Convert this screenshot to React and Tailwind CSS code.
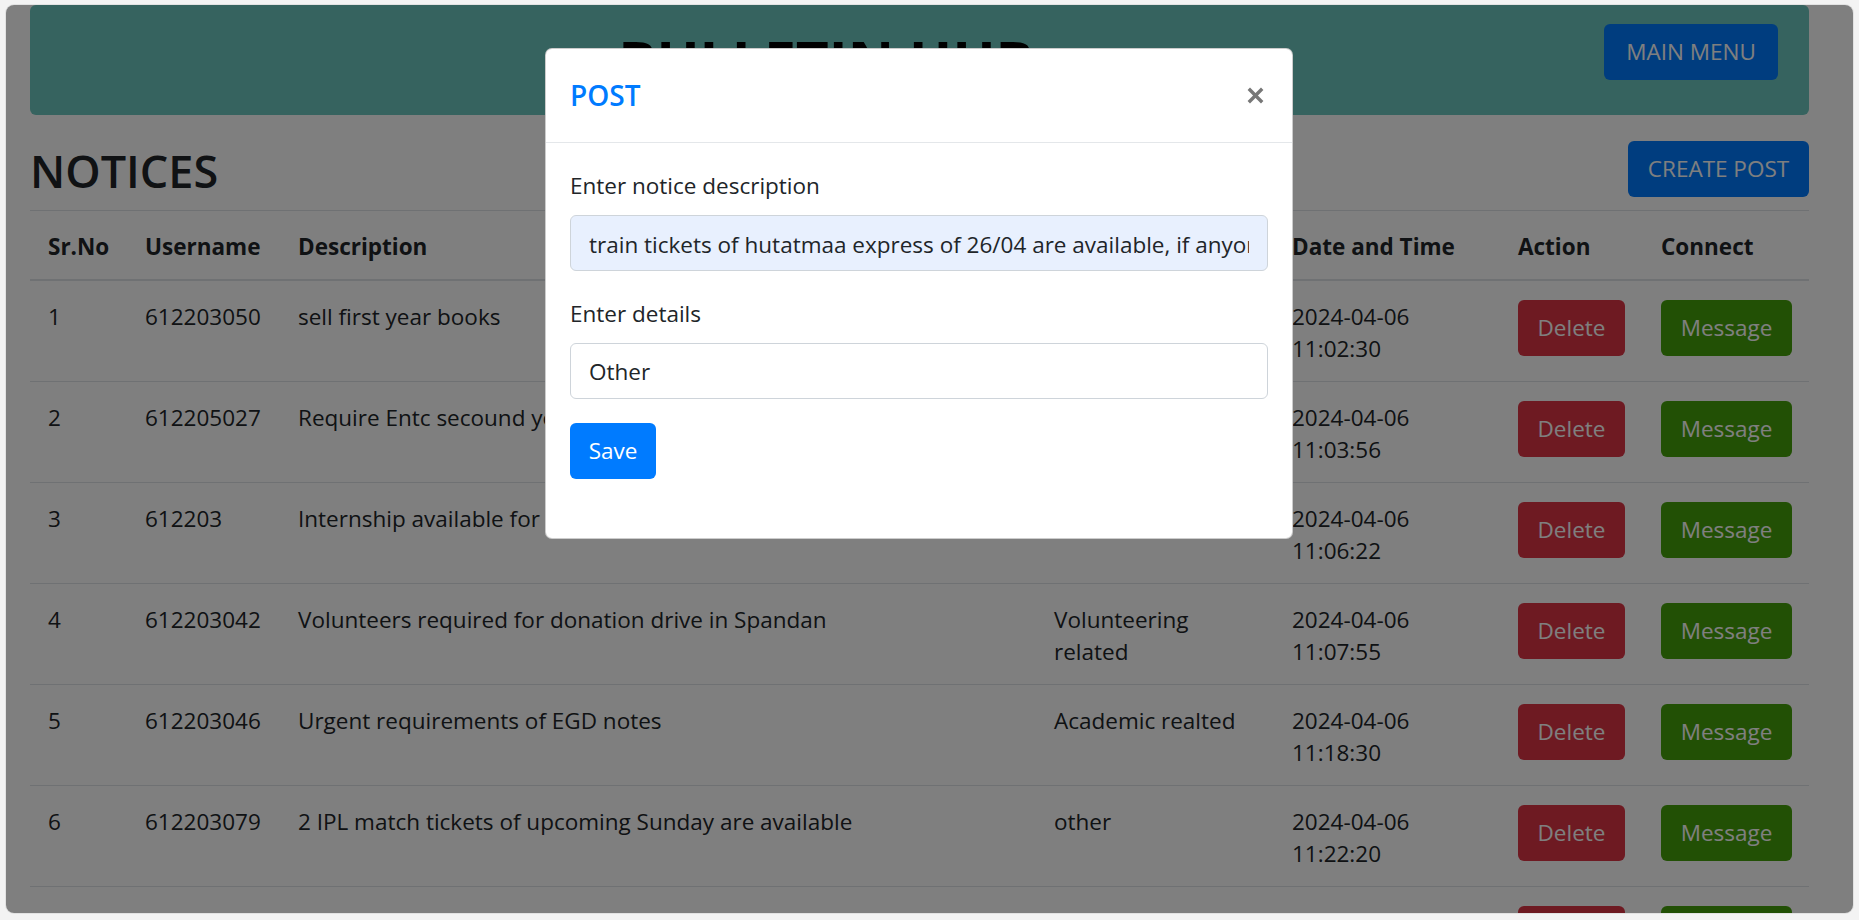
import React from "react";

const rows = [
  { n: 1, u: "612203050", d: "sell first year books", c: "Academic related", dt: ["2024-04-06", "11:02:30"] },
  { n: 2, u: "612205027", d: "Require Entc secound year books", c: "Academic related", dt: ["2024-04-06", "11:03:56"] },
  { n: 3, u: "612203", d: "Internship available for second year students", c: "Internship", dt: ["2024-04-06", "11:06:22"] },
  { n: 4, u: "612203042", d: "Volunteers required for donation drive in Spandan", c: "Volunteering related", dt: ["2024-04-06", "11:07:55"] },
  { n: 5, u: "612203046", d: "Urgent requirements of EGD notes", c: "Academic realted", dt: ["2024-04-06", "11:18:30"] },
  { n: 6, u: "612203079", d: "2 IPL match tickets of upcoming Sunday are available", c: "other", dt: ["2024-04-06", "11:22:20"] },
  { n: 7, u: "612203061", d: "Lost ID card near main building", c: "other", dt: ["2024-04-06", "11:30:12"] },
];

export default function App() {
  return (
    <div className="h-[920px] w-full overflow-hidden bg-[#f3f3f3] pt-[5px] pl-[6px] pr-[6px] pb-[7px] font-['Open_Sans',sans-serif] text-[#212529]">
      <div className="relative h-full overflow-hidden rounded-[8px] bg-white shadow-[0_0_0_1px_#e2e2e2]">
        {/* Page */}
        <div className="ml-[24px] mr-[44px]">
          <header className="flex h-[110px] items-start rounded-[6px] bg-[#6cc6be] pl-[18px] pr-[31px] pt-[18px]">
            <h1 className="mt-[2px] flex-1 text-center text-[57px] font-bold leading-[72px] text-black">
              BULLETIN HUB
            </h1>
            <button className="mt-[1px] h-[56px] w-[174px] rounded-[6px] bg-[#007bff] text-[22.5px] leading-[36px] text-white">
              MAIN MENU
            </button>
          </header>

          <div className="mt-[26px] flex h-[56px] items-center justify-between">
            <h2 className="pt-[4px] text-[45px] font-semibold leading-[56px] text-[#212529]">NOTICES</h2>
            <button className="h-[56px] w-[181px] rounded-[6px] bg-[#007bff] text-[22.5px] leading-[36px] text-white">
              CREATE POST
            </button>
          </div>

          <table className="mt-[13px] w-full table-fixed border-t border-[#dee2e6] text-[22.5px] leading-[32px]">
            <colgroup>
              <col className="w-[97px]" />
              <col className="w-[153px]" />
              <col className="w-[756px]" />
              <col className="w-[238px]" />
              <col className="w-[226px]" />
              <col className="w-[143px]" />
              <col className="w-[166px]" />
            </colgroup>
            <thead>
              <tr className="border-b-2 border-[#dee2e6]">
                <th className="px-[18px] pt-[20px] pb-[16px] text-left font-bold">Sr.No</th>
                <th className="px-[18px] pt-[20px] pb-[16px] text-left font-bold">Username</th>
                <th className="px-[18px] pt-[20px] pb-[16px] text-left font-bold">Description</th>
                <th className="px-[18px] pt-[20px] pb-[16px] text-left font-bold">Details</th>
                <th className="px-[18px] pt-[20px] pb-[16px] text-left font-bold whitespace-nowrap">Date and Time</th>
                <th className="px-[18px] pt-[20px] pb-[16px] text-left font-bold">Action</th>
                <th className="px-[18px] pt-[20px] pb-[16px] text-left font-bold">Connect</th>
              </tr>
            </thead>
            <tbody>
              {rows.map((r) => (
                <tr key={r.n} className="border-b border-[#dee2e6]">
                  <td className="px-[18px] pt-[20px] pb-[16px] align-top">{r.n}</td>
                  <td className="px-[18px] pt-[20px] pb-[16px] align-top">{r.u}</td>
                  <td className="px-[18px] pt-[20px] pb-[16px] align-top">{r.d}</td>
                  <td className="px-[18px] pt-[20px] pb-[16px] align-top">{r.c}</td>
                  <td className="px-[18px] pt-[20px] pb-[16px] align-top">
                    <div>{r.dt[0]}</div>
                    <div>{r.dt[1]}</div>
                  </td>
                  <td className="p-[18px] align-top">
                    <button className="mt-[1px] block h-[56px] w-[107px] rounded-[6px] bg-[#dc3545] text-[22.5px] leading-[36px] text-white">
                      Delete
                    </button>
                  </td>
                  <td className="p-[18px] align-top">
                    <button className="mt-[1px] block h-[56px] w-[131px] rounded-[6px] bg-[#45a00b] text-[22.5px] leading-[36px] text-white">
                      Message
                    </button>
                  </td>
                </tr>
              ))}
            </tbody>
          </table>
        </div>

        {/* Backdrop */}
        <div className="absolute inset-0 bg-black/50" />

        {/* Modal */}
        <div className="absolute left-[539px] top-[43px] w-[748px] rounded-[7px] border border-black/20 bg-white">
          <div className="flex items-center justify-between border-b border-[#e4e7ea] p-[24px]">
            <h5 className="text-[28px] font-semibold leading-[45px] text-[#007bff]">POST</h5>
            <svg width="17" height="17" viewBox="0 0 17 17" className="mr-[4px]">
              <path d="M1.8 1.8 L15.2 15.2 M15.2 1.8 L1.8 15.2" stroke="#777777" strokeWidth="3.4" strokeLinecap="butt" />
            </svg>
          </div>
          <div className="px-[24px] pt-[24px] pb-[59px]">
            <div className="mb-[24px]">
              <label className="mb-[11px] block pt-[1px] text-[22.5px] leading-[36px] text-[#212529]">Enter notice description</label>
              <input
                readOnly
                defaultValue="train tickets of hutatmaa express of 26/04 are available, if anyone wants contact me"
                className="block h-[56px] w-full rounded-[6px] border border-[#ced4da] bg-[#e8f0fe] px-[18px] pt-[2px] text-[22.5px] text-[#212529] outline-none"
              />
            </div>
            <div className="mb-[24px]">
              <label className="mb-[11px] block pt-[1px] text-[22.5px] leading-[36px] text-[#212529]">Enter details</label>
              <input
                readOnly
                defaultValue="Other"
                className="block h-[56px] w-full rounded-[6px] border border-[#ced4da] bg-white px-[18px] text-[22.5px] text-[#212529] outline-none"
              />
            </div>
            <button className="h-[56px] w-[86px] rounded-[6px] bg-[#007bff] text-[22.5px] leading-[36px] text-white">
              Save
            </button>
          </div>
        </div>
      </div>
    </div>
  );
}
